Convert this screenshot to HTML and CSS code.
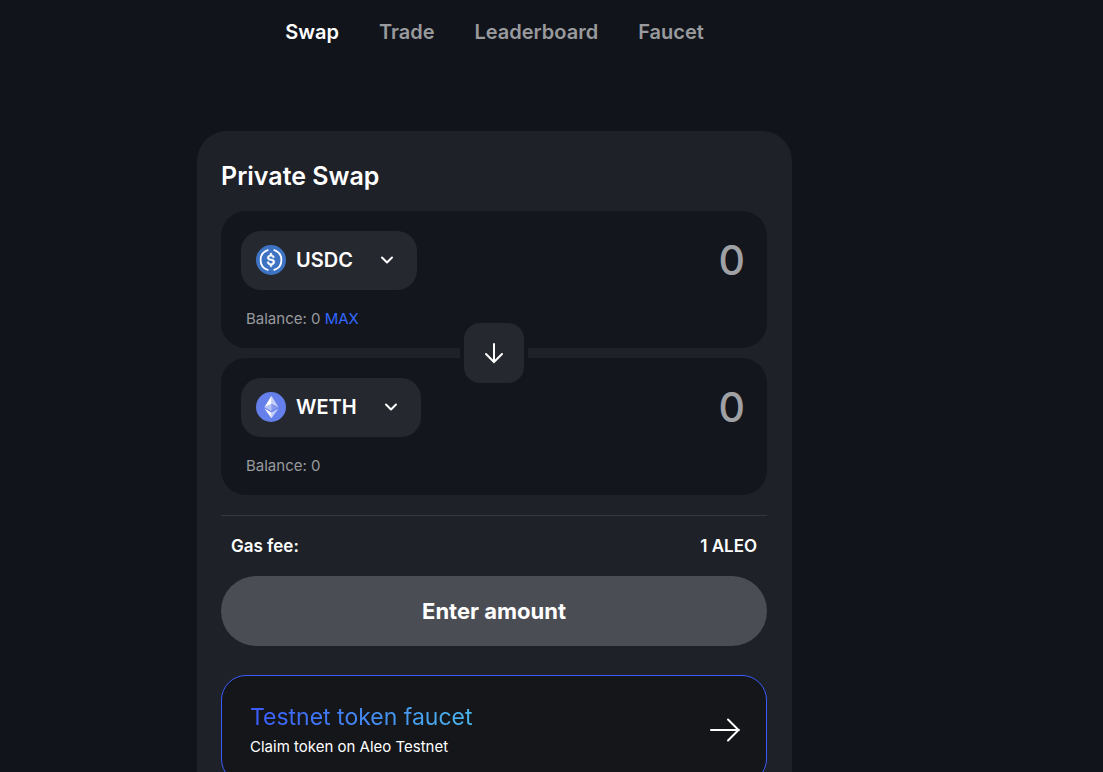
FILE: index.html
```html
<!DOCTYPE html>
<html lang="en">
<head>
  <meta charset="UTF-8" />
  <meta name="viewport" content="width=device-width, initial-scale=1.0"/>
  <title>Private Swap</title>
  <link rel="stylesheet" href="styles.css">
</head>
<body>

<header>
  <nav class="nav">
    <a class="active" href="#swap">Swap</a>
    <a href="#trade">Trade</a>
    <a href="#leaderboard">Leaderboard</a>
    <a href="#faucet">Faucet</a>
  </nav>
</header>

<main>
  <section class="card">
    <h1>Private Swap</h1>

    <div class="panels">
      <div class="panel">
        <div class="panel-row">
          <button class="token" type="button">
            <svg class="token-icon" viewBox="0 0 32 32">
              <circle cx="16" cy="16" r="16" fill="#3e73c4"/>
              <path fill="#fff" stroke="#fff" stroke-width=".5" d="M20.02 18.12c0-2.12-1.28-2.85-3.83-3.15-1.82-.24-2.18-.73-2.18-1.58 0-.85.61-1.4 1.82-1.4 1.09 0 1.7.37 2 1.28a.46.46 0 0 0 .43.3h.97a.42.42 0 0 0 .42-.43v-.06a3.04 3.04 0 0 0-2.73-2.49V9.14c0-.25-.18-.43-.49-.49h-.91c-.24 0-.43.18-.49.49v1.4c-1.82.24-2.97 1.45-2.97 2.97 0 2 1.21 2.79 3.76 3.09 1.7.3 2.25.67 2.25 1.64 0 .97-.85 1.64-2.01 1.64-1.58 0-2.12-.67-2.31-1.58a.45.45 0 0 0-.42-.36h-1.03a.42.42 0 0 0-.43.42v.06c.24 1.52 1.21 2.61 3.22 2.92v1.45c0 .25.18.43.48.49h.91c.25 0 .43-.18.49-.49v-1.45c1.82-.31 3.03-1.58 3.03-3.22z"/>
              <path stroke="#fff" stroke-width="1.900" stroke-linecap="round" d="M12.500 5.400a11.200 11.200 0 0 0 0 21.200M19.500 5.400a11.200 11.200 0 0 1 0 21.200"/>
            </svg>
            <span>USDC</span>
            <svg class="chevron" viewBox="0 0 14 14"><path d="M2 4.500 7 9.500l5-5"/></svg>
          </button>
          <input class="amount" type="text" inputmode="decimal" placeholder="0" aria-label="Amount to pay">
        </div>
        <div class="balance">Balance: 0 <button class="max" type="button">MAX</button></div>
      </div>

      <div class="panel">
        <div class="panel-row">
          <button class="token" type="button">
            <svg class="token-icon" viewBox="0 0 32 32">
              <circle cx="16" cy="16" r="16" fill="#6680eb"/>
              <path fill="#c5cef8" d="M16.500 4v8.870l7.500 3.350z"/>
              <path fill="#fff" d="M16.500 4 9 16.220l7.500-3.350z"/>
              <path fill="#c5cef8" d="M16.500 21.970V28L24 17.620z"/>
              <path fill="#fff" d="M16.500 28v-6.030L9 17.620z"/>
              <path fill="#8598ee" d="m16.500 20.570 7.500-4.350-7.500-3.350z"/>
              <path fill="#b7c3f6" d="m9 16.220 7.500 4.350v-7.700z"/>
            </svg>
            <span>WETH</span>
            <svg class="chevron" viewBox="0 0 14 14"><path d="M2 4.500 7 9.500l5-5"/></svg>
          </button>
          <input class="amount" type="text" inputmode="decimal" placeholder="0" aria-label="Amount to receive">
        </div>
        <div class="balance">Balance: 0</div>
      </div>

      <button class="flip" type="button" aria-label="Switch tokens">
        <svg viewBox="0 0 20 22"><path d="M10 2v18M2 12l8 8 8-8"/></svg>
      </button>
    </div>

    <div class="fee">
      <span>Gas fee:</span>
      <span>1 ALEO</span>
    </div>

    <button class="submit" type="button">Enter amount</button>

    <a class="faucet" href="#faucet">
      <div>
        <div class="faucet-title">Testnet token faucet</div>
        <div class="faucet-text">Claim token on Aleo Testnet</div>
      </div>
      <svg class="faucet-arrow" viewBox="0 0 30 24"><path d="M1 12h28M18 1.500 28.500 12 18 22.500"/></svg>
    </a>
  </section>
</main>

</body>
</html>
```
FILE: styles.css
```css
* {
  box-sizing: border-box;
}

body {
  margin: 0;
  padding-right: 114px;
  background: #11141b;
  color: #fff;
  font-family: Inter, sans-serif;
}

button, input {
  font-family: inherit;
  color: inherit;
  border: none;
  padding: 0;
}

button {
  cursor: pointer;
}

a {
  color: inherit;
  text-decoration: none;
}

svg {
  display: block;
  fill: none;
}

.nav {
  display: flex;
  justify-content: center;
  gap: 40px;
  padding: 20px 0;
  font-size: 20px;
  font-weight: 600;
  line-height: 24px;
  color: #999a9d;
}

.nav .active {
  color: #fff;
}

main {
  padding: 67px 20px 40px;
}

.card {
  max-width: 595px;
  margin: 0 auto;
  padding: 29px 25px 24px 24px;
  background: #1e2128;
  border-radius: 30px;
}

h1 {
  margin: 0 0 19px;
  font-size: 25px;
  font-weight: 600;
  line-height: 32px;
}

.panels {
  position: relative;
  display: flex;
  flex-direction: column;
  gap: 10px;
}

.panel {
  padding: 20px;
  background: #13161d;
  border-radius: 25px;
}

.panel-row {
  display: flex;
  justify-content: space-between;
  align-items: center;
}

.token {
  display: flex;
  align-items: center;
  flex-shrink: 0;
  height: 59px;
  padding: 0 23px 1px 15px;
  background: #25282f;
  border-radius: 20px;
  font-size: 20px;
  font-weight: 600;
}

.token-icon {
  width: 30px;
  height: 30px;
  margin-right: 10px;
}

.chevron {
  width: 14px;
  height: 14px;
  margin-left: 27px;
  stroke: #fff;
  stroke-width: 2;
  stroke-linecap: round;
  stroke-linejoin: round;
}

.amount {
  flex: 1;
  min-width: 0;
  height: 50px;
  padding: 0 2px 2px 0;
  background: none;
  outline: none;
  font-size: 41px;
  font-weight: 500;
  text-align: right;
}

.amount::placeholder {
  color: #a0a1a4;
  opacity: 1;
}

.balance {
  margin-top: 19px;
  padding-left: 5px;
  font-size: 15px;
  line-height: 19px;
  color: #999a9d;
}

.max {
  background: none;
  font-size: 15px;
  color: #3268ff;
}

/* sits over the seam between the two panels */
.flip {
  position: absolute;
  top: 50%;
  left: 50%;
  display: flex;
  align-items: center;
  justify-content: center;
  width: 60px;
  height: 60px;
  transform: translate(-50%, -50%);
  background: #25282f;
  border-radius: 16px;
  box-shadow: 0 0 0 4px #13161d;
}

.flip svg {
  width: 20px;
  height: 22px;
  stroke: #fff;
  stroke-width: 2;
  stroke-linecap: round;
}

.fee {
  display: flex;
  justify-content: space-between;
  margin-top: 20px;
  padding: 20px 10px;
  border-top: 1px solid #34373e;
  font-size: 17px;
  font-weight: 600;
  line-height: 20px;
}

.submit {
  display: block;
  width: 100%;
  height: 70px;
  background: #4b4d54;
  border-radius: 35px;
  font-size: 22px;
  font-weight: 700;
}

.faucet {
  display: flex;
  align-items: center;
  justify-content: space-between;
  margin-top: 29px;
  padding: 26px 26px 26px 28px;
  background: #15161a;
  border: 1px solid #3b5bfd;
  border-radius: 25px;
}

.faucet-title {
  width: fit-content;
  font-size: 23px;
  line-height: 30px;
  color: transparent;
  background: linear-gradient(90deg, #3b5bfd, #4bb5e8);
  background-clip: text;
  -webkit-background-clip: text;
}

.faucet-text {
  margin-top: 5px;
  font-size: 15px;
  line-height: 20px;
}

.faucet-arrow {
  width: 30px;
  height: 24px;
  stroke: #fff;
  stroke-width: 2;
  stroke-linecap: round;
  stroke-linejoin: round;
}
```
